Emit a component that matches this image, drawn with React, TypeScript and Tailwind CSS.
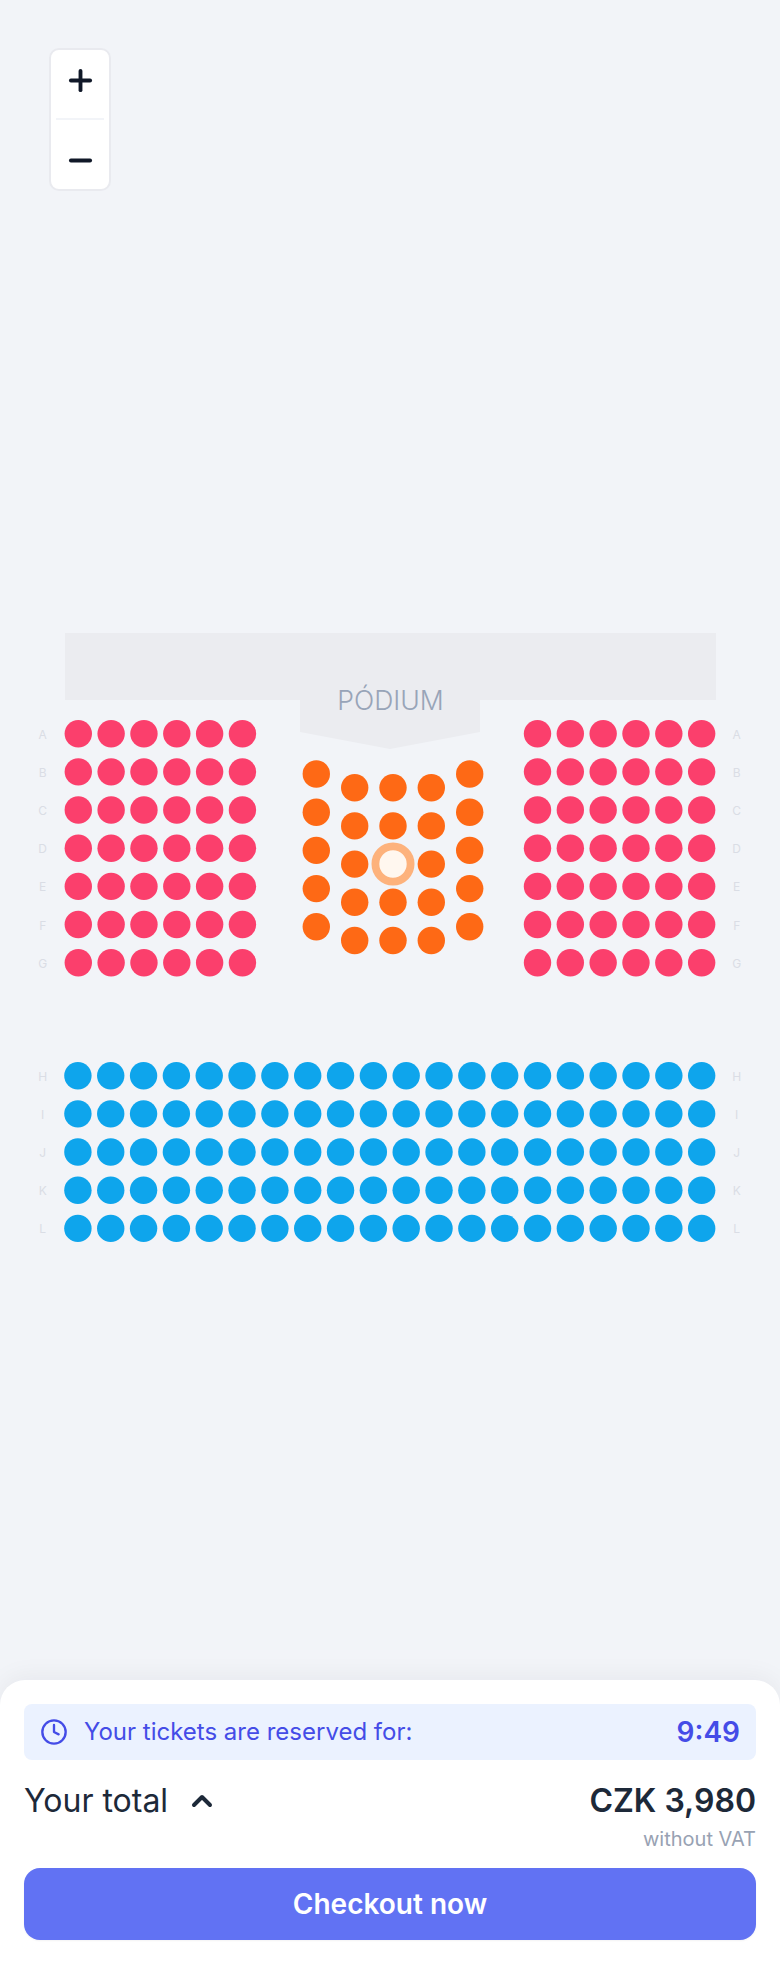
import { ChevronUp, Clock, Minus, Plus } from "lucide-react";

const PITCH_X = 32.83;
const PITCH_Y = 38.17;
const R = 13.7;

const SIDE_ROWS = ["A", "B", "C", "D", "E", "F", "G"];
const BACK_ROWS = ["H", "I", "J", "K", "L"];
const CENTER_X = [316.3, 354.7, 393, 431.3, 469.7];

function Block({ startX, startY, cols, rows, fill }: { startX: number; startY: number; cols: number; rows: number; fill: string }) {
  return (
    <g fill={fill}>
      {Array.from({ length: rows }).flatMap((_, r) =>
        Array.from({ length: cols }).map((_, c) => (
          <circle key={`${r}-${c}`} cx={startX + c * PITCH_X} cy={startY + r * PITCH_Y} r={R} />
        )),
      )}
    </g>
  );
}

function RowLabels({ labels, startY }: { labels: string[]; startY: number }) {
  return (
    <g fill="#dadde5" fontSize="12" textAnchor="middle" style={{ fontFamily: "Inter, sans-serif" }}>
      {labels.map((l, i) => (
        <g key={l}>
          <text x={42.7} y={startY + i * PITCH_Y + 5}>{l}</text>
          <text x={736.7} y={startY + i * PITCH_Y + 5}>{l}</text>
        </g>
      ))}
    </g>
  );
}

function SeatMap() {
  return (
    <svg width="780" height="1680" viewBox="0 0 780 1680" className="block">
      <rect x="65" y="633" width="651" height="67" fill="#ebecf0" />
      <polygon points="300,700 480,700 480,732 390,749 300,732" fill="#ebecf0" />
      <text x="390.5" y="709.5" textAnchor="middle" fontSize="26.6" fontWeight="300" fill="#98a4b8" style={{ fontFamily: "Inter, sans-serif" }}>
        PÓDIUM
      </text>

      <RowLabels labels={SIDE_ROWS} startY={733.7} />
      <RowLabels labels={BACK_ROWS} startY={1075.7} />

      <Block startX={78.3} startY={733.7} cols={6} rows={7} fill="#fb3f6c" />
      <Block startX={537.5} startY={733.7} cols={6} rows={7} fill="#fb3f6c" />
      <Block startX={77.9} startY={1075.7} cols={20} rows={5} fill="#0ea5ec" />

      <g fill="#fe6915">
        {CENTER_X.map((x, c) =>
          [0, 1, 2, 3, 4].map((r) => {
            const y = (c === 0 || c === 4 ? 774 : 787.7) + r * 38.2;
            if (c === 2 && r === 2) return null;
            return <circle key={`${c}-${r}`} cx={x} cy={y} r={R} />;
          }),
        )}
      </g>
      <circle cx="393" cy="864" r="17.6" fill="#fff7ef" stroke="#fdb27c" strokeWidth="7.8" />
    </svg>
  );
}

function ZoomControl() {
  return (
    <div className="absolute left-[49px] top-[48px] flex h-[143px] w-[62px] flex-col items-center rounded-[10px] border-2 border-[#e9eaef] bg-white">
      <button className="flex h-[68px] w-full items-center justify-center pb-2 text-[#101828]">
        <Plus size={33} strokeWidth={2.8} />
      </button>
      <div className="h-0.5 w-12 bg-[#f2f4f8]" />
      <button className="flex w-full flex-1 items-center justify-center pt-[11px] text-[#101828]">
        <Minus size={33} strokeWidth={2.8} />
      </button>
    </div>
  );
}

function CheckoutSheet() {
  return (
    <div className="flex h-[284px] flex-col rounded-t-[25px] bg-white px-6 pt-6 shadow-[0_-4px_24px_rgba(16,24,40,0.05)]">
      <div className="flex h-14 items-center justify-between rounded-lg bg-[#ebf2ff] pl-4 pr-4 text-[#444ce7]">
        <div className="flex items-center gap-4">
          <Clock size={28} strokeWidth={2} />
          <span className="text-2xl">Your tickets are reserved for:</span>
        </div>
        <span className="text-[28px] font-semibold">9:49</span>
      </div>
      <div className="mt-[21px] flex h-10 items-center justify-between text-[#1d2939]">
        <div className="flex items-center gap-[18px]">
          <span className="text-[32px]">Your total</span>
          <ChevronUp size={32} strokeWidth={3} />
        </div>
        <span className="text-[32px] font-semibold">CZK 3,980</span>
      </div>
      <div className="mt-[3px] text-right text-[20px] leading-[30px] text-[#98a2b3]">without VAT</div>
      <button className="mt-[14px] flex h-[72px] items-center justify-center rounded-2xl bg-[#6172f3] text-[28px] font-semibold text-white shadow-[0_1px_2px_rgba(16,24,40,0.05)]">
        Checkout now
      </button>
    </div>
  );
}

export default function App() {
  return (
    <div className="flex h-[1964px] w-[780px] flex-col overflow-hidden bg-[#f2f4f8] font-['Inter',sans-serif]">
      <div className="relative h-[1680px]">
        <SeatMap />
        <ZoomControl />
      </div>
      <CheckoutSheet />
    </div>
  );
}
